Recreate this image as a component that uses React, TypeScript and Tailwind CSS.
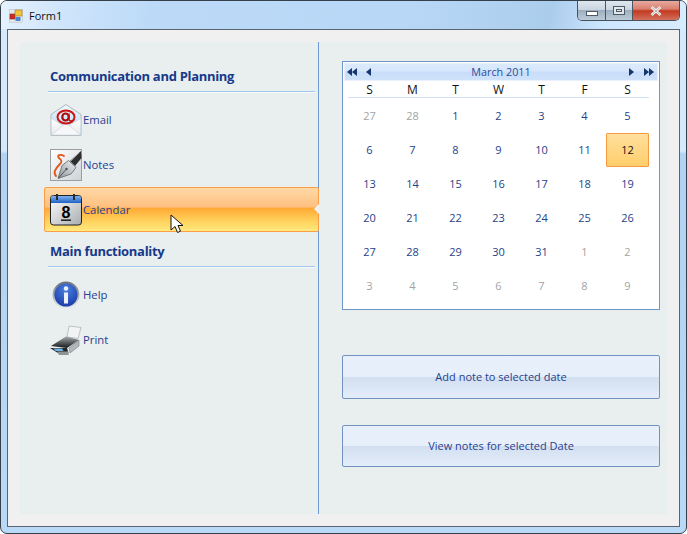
import { ReactNode } from "react";

const weeks = [
  [27, 28, 1, 2, 3, 4, 5],
  [6, 7, 8, 9, 10, 11, 12],
  [13, 14, 15, 16, 17, 18, 19],
  [20, 21, 22, 23, 24, 25, 26],
  [27, 28, 29, 30, 31, 1, 2],
  [3, 4, 5, 6, 7, 8, 9],
];

const EmailIcon = () => (
  <svg width="32" height="32" viewBox="0 0 32 32">
    <defs>
      <linearGradient id="envBack" x1="0" y1="0" x2="0" y2="1">
        <stop offset="0" stopColor="#f3f8fc" />
        <stop offset="1" stopColor="#a6d6f2" />
      </linearGradient>
      <linearGradient id="envFront" x1="0" y1="0" x2="0" y2="1">
        <stop offset="0" stopColor="#ffffff" />
        <stop offset="1" stopColor="#e6e8ea" />
      </linearGradient>
    </defs>
    <path d="M1 10.500 16 .5l15 10v21H1z" fill="url(#envBack)" stroke="#b0b8be" />
    <path d="M1.500 14.500 16 23l14.500-8.500v16.500h-29z" fill="url(#envFront)" />
    <path d="M1.500 31 14 20.500h4L30.500 31z" fill="#f6f7f8" stroke="#cfd4d7" strokeWidth=".6" />
    <path d="M1.500 14.500 13 21.500M30.500 14.500 19 21.500" stroke="#cdd3d7" strokeWidth=".7" fill="none" />
    <ellipse cx="16" cy="13" rx="8.500" ry="6.500" fill="none" stroke="#cf1414" strokeWidth="2" />
    <ellipse cx="15.500" cy="13" rx="3.200" ry="3.500" fill="none" stroke="#a80d0d" strokeWidth="2.200" />
    <path d="M19 9.500v6c0 1.500 3 2 5 .5" fill="none" stroke="#c01010" strokeWidth="1.500" />
  </svg>
);

const NotesIcon = () => (
  <svg width="32" height="32" viewBox="0 0 32 32">
    <defs>
      <linearGradient id="noteBg" x1="0" y1="0" x2="1" y2="1">
        <stop offset="0" stopColor="#ffffff" />
        <stop offset="1" stopColor="#cfd3d6" />
      </linearGradient>
      <linearGradient id="nib" x1="0" y1="1" x2="1" y2="0">
        <stop offset="0" stopColor="#8d9398" />
        <stop offset="1" stopColor="#f1f3f4" />
      </linearGradient>
    </defs>
    <rect x=".5" y=".5" width="31" height="31" fill="url(#noteBg)" stroke="#9b9f9f" />
    <path d="M14 7C10 4.500 6.500 6.500 9 9c2 2 4 3 .5 6.500C5 20 3 24 6 27" fill="none" stroke="#e0561a" strokeWidth="1.800" strokeLinecap="round" />
    <path d="M31 2 20 12l5 5L31.500 9z" fill="#2e2e2e" />
    <path d="M29 4 21 12" stroke="#8c8c8c" strokeWidth="1" />
    <path d="M18.500 11.500 26 18.500l-5 6.500-13 4.500 4-13z" fill="url(#nib)" stroke="#5c6468" strokeWidth=".8" />
    <path d="M8.500 29 16 20.500" stroke="#4a5055" strokeWidth=".9" />
    <circle cx="16.500" cy="20" r="1.200" fill="#4a5055" />
  </svg>
);

const CalendarIcon = () => (
  <svg width="32" height="32" viewBox="0 0 32 32">
    <defs>
      <linearGradient id="calTop" x1="0" y1="0" x2="0" y2="1">
        <stop offset="0" stopColor="#7fb2f2" />
        <stop offset="1" stopColor="#1f5fc4" />
      </linearGradient>
      <linearGradient id="calBody" x1="0" y1="0" x2="1" y2="1">
        <stop offset="0" stopColor="#ffffff" />
        <stop offset="1" stopColor="#a8acaf" />
      </linearGradient>
    </defs>
    <rect x=".5" y="1.500" width="31" height="29.500" rx="3" fill="url(#calBody)" stroke="#1e2124" />
    <path d="M1 9V4.500A2.500 2.500 0 0 1 3.500 2h25A2.500 2.500 0 0 1 31 4.500V9z" fill="url(#calTop)" />
    <path d="M7 0v6M24 0v6" stroke="#2a2d30" strokeWidth="2" />
    <text x="16" y="23.500" textAnchor="middle" fontFamily="'Liberation Sans', sans-serif" fontWeight="700" fontSize="16" fill="#000">8</text>
    <rect x="11" y="25.500" width="10" height="1.300" fill="#000" />
  </svg>
);

const HelpIcon = () => (
  <svg width="32" height="32" viewBox="0 0 32 32">
    <defs>
      <linearGradient id="infoRing" x1="0" y1="0" x2="0" y2="1">
        <stop offset="0" stopColor="#6d7378" />
        <stop offset="1" stopColor="#e4e7e9" />
      </linearGradient>
      <radialGradient id="infoFill" cx=".5" cy=".3" r=".8">
        <stop offset="0" stopColor="#4d7fe0" />
        <stop offset="1" stopColor="#0f2f9e" />
      </radialGradient>
    </defs>
    <circle cx="16" cy="16" r="12.500" fill="url(#infoFill)" stroke="url(#infoRing)" strokeWidth="1.800" />
    <circle cx="16" cy="9.500" r="2.200" fill="#f1f4fa" />
    <rect x="14" y="13.500" width="4" height="11" fill="#eef1f7" />
  </svg>
);

const PrintIcon = () => (
  <svg width="32" height="32" viewBox="0 0 32 32">
    <defs>
      <linearGradient id="printBody" x1="0" y1="0" x2="0" y2="1">
        <stop offset="0" stopColor="#a4a8ac" />
        <stop offset="1" stopColor="#16181a" />
      </linearGradient>
    </defs>
    <path d="M19 2l12 1.500-3 11L17 13z" fill="#f2f3f4" stroke="#a9adb1" strokeWidth=".7" />
    <path d="M1 22 16 12.500l13 3.500-12 8z" fill="url(#printBody)" />
    <path d="M29 16v6l-9 7-1-5z" fill="#b2b7bb" stroke="#6a6f73" strokeWidth=".5" />
    <path d="M0 24 17 24l1.500 5H8z" fill="#25282a" />
    <path d="M3 24.500h9l1.500 2.500H6z" fill="#6fb4e6" />
    <path d="M7 27.500h11L19 31H9z" fill="#8f9498" />
  </svg>
);

// Aero caption buttons, drawn over the frame edge
const CaptionButtons = () => (
  <div className="flex h-5 w-[103px] overflow-hidden rounded-b-[5px] border border-t-0 border-[#47525c]">
    <div className="flex w-[28px] items-end justify-center border-r border-[#4b5660] bg-[linear-gradient(180deg,#dfe7ee_0%,#c9d5e0_45%,#9dafbf_50%,#bccbd8_100%)] pb-[4px]">
      <div className="h-[5px] w-[12px] border border-[#4e5962] bg-white" />
    </div>
    <div className="flex w-[27px] items-center justify-center border-r border-[#4b5660] bg-[linear-gradient(180deg,#dfe7ee_0%,#c9d5e0_45%,#9dafbf_50%,#bccbd8_100%)]">
      <div className="flex h-[9px] w-[12px] items-center justify-center border border-[#4e5962] bg-[#dfe6ec]">
        <div className="h-[3px] w-[6px] border border-[#4e5962]" />
      </div>
    </div>
    <div className="flex flex-1 items-center justify-center bg-[linear-gradient(180deg,#e8a99f_0%,#d98070_42%,#c23a20_52%,#d2705c_100%)]">
      <svg width="12" height="10" viewBox="0 0 12 10">
        <path d="M1.500 1 10.500 9M10.500 1 1.500 9" stroke="#f3f3f3" strokeWidth="2.800" />
        <path d="M1.500 1 10.500 9M10.500 1 1.500 9" stroke="#5a4a48" strokeWidth=".4" />
      </svg>
    </div>
  </div>
);

const FormIcon = () => (
  <svg width="14" height="14" viewBox="0 0 14 14">
    <rect x=".5" y=".5" width="13" height="13" fill="#e4e8ec" stroke="#b8bec4" strokeWidth=".5" />
    <rect x="1" y="5" width="5" height="5" fill="#d42a20" stroke="#7a2a20" strokeWidth=".6" />
    <rect x="6" y="1" width="7" height="6" fill="#f2c53a" stroke="#9c7a20" strokeWidth=".6" />
    <rect x="6.500" y="8" width="5" height="4" fill="#4a86d8" />
  </svg>
);

const Heading = ({ children, className }: { children: ReactNode; className?: string }) => (
  <div className={className}>
    <div className="h-[22px] pl-[6px] text-[13px] leading-[22px] font-bold tracking-[-0.3px] text-[#16398a]">{children}</div>
    <div className="mt-[4px] ml-[4px] h-px w-[267px] bg-[#a3c6ec]" />
    <div className="ml-[4px] h-px w-[267px] bg-[#fafcfc]" />
  </div>
);

const NavItem = ({ icon, label, selected }: { icon: ReactNode; label: string; selected?: boolean }) => (
  <div
    className={
      selected
        ? "relative flex h-[45px] w-[275px] items-center rounded-[2px] border border-[#fb9e45] bg-[linear-gradient(180deg,#ffd9a8_0%,#ffbf7f_45%,#ffa834_46%,#ffd05a_75%,#ffe97f_100%)] pl-[5px]"
        : "flex h-[45px] w-[275px] items-center pl-[6px]"
    }
  >
    {icon}
    <span className="mt-[2px] ml-[1px] text-[11.300px] text-[#26418e]">{label}</span>
    {selected && (
      <div className="absolute top-[16px] right-[-1px] h-0 w-0 border-y-[5px] border-r-[5px] border-y-transparent border-r-[#eef2f2]" />
    )}
  </div>
);

const CalendarPanel = () => (
  <div className="h-[249px] w-[318px] border border-[#6f96c8] bg-white">
    <div className="m-px flex h-[18px] items-center justify-between border border-[#e8f1fc] bg-[linear-gradient(180deg,#dceafd_0%,#d6e6fc_45%,#c8ddfa_50%,#cfe2fb_100%)] px-[2px] text-[10.800px] text-[#2d4c9c]">
      <div className="flex w-[30px] gap-[8px]">
        <svg width="11" height="8" viewBox="0 0 11 8"><path d="M5 0v8L0 4zM10 0v8L5 4z" fill="#17356f" /></svg>
        <svg width="5" height="8" viewBox="0 0 5 8"><path d="M5 0v8L0 4z" fill="#17356f" /></svg>
      </div>
      <span>March 2011</span>
      <div className="flex w-[30px] justify-end gap-[10px]">
        <svg width="5" height="8" viewBox="0 0 5 8"><path d="M0 0v8l5-4z" fill="#17356f" /></svg>
        <svg width="11" height="8" viewBox="0 0 11 8"><path d="M0 0v8l5-4zM5 0v8l5-4z" fill="#17356f" /></svg>
      </div>
    </div>
    <div className="mx-[5px] mt-[1px] grid h-[16px] w-[301px] grid-cols-7 border-b border-[#cfdff7] text-center text-[12px] leading-[15px] text-[#111]">
      {["S", "M", "T", "W", "T", "F", "S"].map((d, i) => (
        <span key={i}>{d}</span>
      ))}
    </div>
    <div className="mx-[5px] mt-px grid w-[301px] grid-cols-7 text-center text-[11px]">
      {weeks.flat().map((n, i) => {
        const outside = i < 2 || i >= 33;
        const selected = i === 13;
        return (
          <div
            key={i}
            className={
              selected
                ? "flex h-[34px] items-center justify-center rounded-[1px] border border-[#f89a40] bg-[linear-gradient(180deg,#ffe09d_0%,#ffce6b_100%)] text-[#111]"
                : outside
                  ? "flex h-[34px] items-center justify-center text-[#a3a3a3]"
                  : "flex h-[34px] items-center justify-center text-[#1d4289]"
            }
          >
            {n}
          </div>
        );
      })}
    </div>
  </div>
);

const BigButton = ({ label, className }: { label: string; className: string }) => (
  <div
    className={
      "flex w-[318px] items-center justify-center rounded-[2px] border border-[#7192c0] bg-[linear-gradient(180deg,#e8f0fb_0%,#e7effb_50%,#d2dff0_50%,#e4edfa_100%)] text-[11px] text-[#26418e] " +
      className
    }
  >
    {label}
  </div>
);

export default function App() {
  return (
    <div className="flex h-[534px] w-[687px] flex-col overflow-hidden rounded-[7px] border border-[#35404a] bg-[linear-gradient(180deg,#d3e9fd_0,#d3e9fd_150px,#b0d2f4_153px,#b9d9f7_100%)] font-['Open_Sans','Noto_Sans',sans-serif]">
      <div className="flex h-[28px] shrink-0 justify-between bg-[linear-gradient(102deg,#e6f2fe_0%,#cfe5fb_9%,#bcdaf8_22%,#b8d7f6_60%,#abcdec_80%,#cde6ff_88%,#d8ecfe_100%)] pr-[6px] pl-[8px]">
        <div className="flex items-center gap-[6px] pt-[2px]">
          <FormIcon />
          <span className="text-[11px] text-[#111]">Form1</span>
        </div>
        <CaptionButtons />
      </div>

      <div className="mx-[6px] mb-[6px] flex min-h-0 flex-1 flex-col border border-[#59646e] bg-[#f0f0f0] p-[12px]">
        <div className="flex flex-1 bg-[#e9eeee]">
          <div className="w-[299px] shrink-0 border-r border-[#6e9ad6] pl-[24px]">
            <Heading className="pt-[23px]">Communication and Planning</Heading>
            <div className="pt-[4px]">
              <NavItem icon={<EmailIcon />} label="Email" />
              <NavItem icon={<NotesIcon />} label="Notes" />
              <NavItem icon={<CalendarIcon />} label="Calendar" selected />
            </div>
            <Heading className="pt-[8px]">Main functionality</Heading>
            <div className="pt-[4px]">
              <NavItem icon={<HelpIcon />} label="Help" />
              <NavItem icon={<PrintIcon />} label="Print" />
            </div>
          </div>
          <div className="flex flex-col pt-[19px] pl-[23px]">
            <CalendarPanel />
            <BigButton label="Add note to selected date" className="mt-[45px] h-[44px]" />
            <BigButton label="View notes for selected Date" className="mt-[26px] h-[42px]" />
          </div>
        </div>
      </div>

      {/* mouse pointer from the capture */}
      <svg className="absolute top-[214px] left-[170px]" width="14" height="20" viewBox="0 0 14 20">
        <path d="M1 1v15l4-3.500 2.500 6 3-1.300-2.500-5.700h5z" fill="#fff" stroke="#111" strokeWidth="1" />
      </svg>
    </div>
  );
}
